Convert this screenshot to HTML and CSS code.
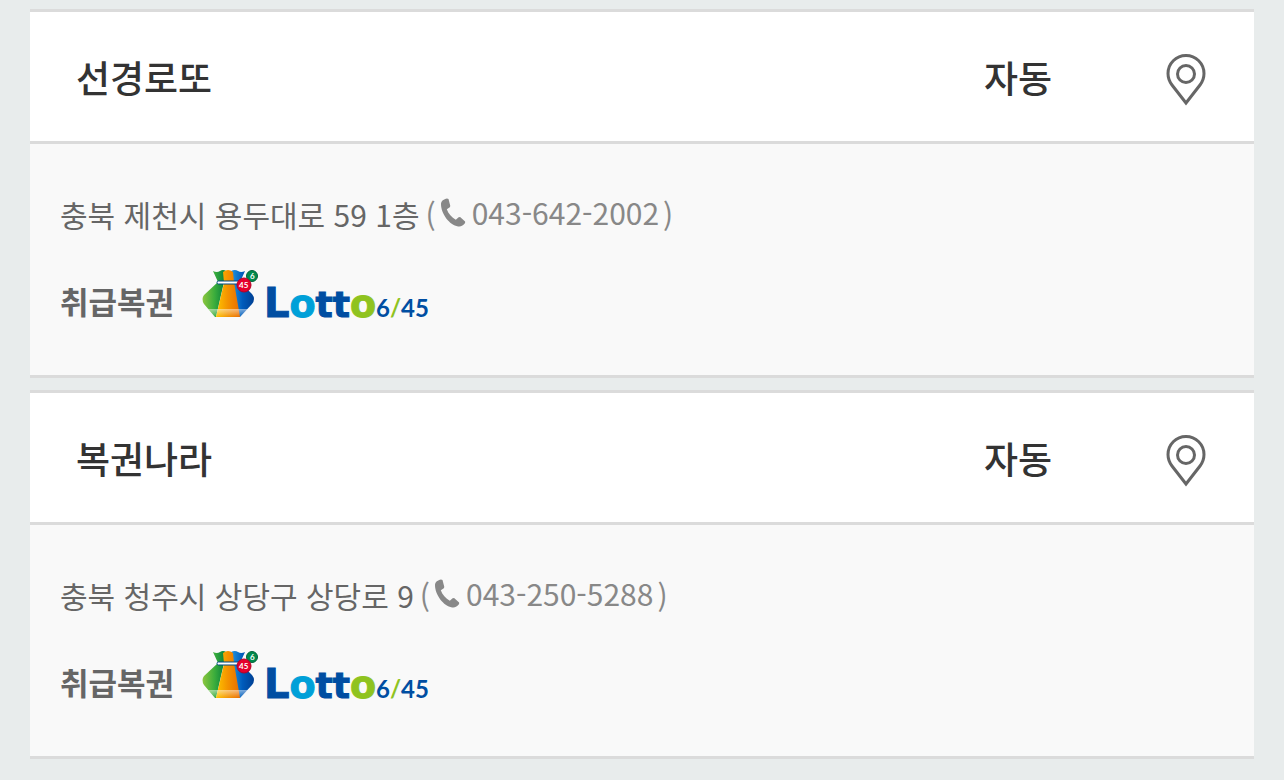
FILE: index.html
```html
<!DOCTYPE html>
<html lang="ko">
<head>
    <meta charset="UTF-8">
    <meta name="viewport" content="width=device-width, initial-scale=1.0">
    <title>로또 판매점</title>
    <link rel="stylesheet" href="styles.css">
</head>
<body>
    <main class="store-list">
        <section class="store">
            <div class="store-head">
                <h2 class="store-name">선경로또</h2>
                <span class="store-type">자동</span>
                <button type="button" class="map-button" aria-label="지도 보기">
                    <svg width="40" height="52" viewBox="0 0 40 52" fill="none" stroke="#666" stroke-width="3">
                        <path d="M20 49L6 31C3 27 2 23 2 19.5a18 18 0 0 1 36 0C38 23 37 27 34 31z"/>
                        <circle cx="20" cy="20" r="8.5"/>
                    </svg>
                </button>
            </div>
            <div class="store-detail">
                <p class="address">
                    <span>충북 제천시 용두대로 59 1층</span>
                    <span class="phone">(
                        <a href="tel:043-642-2002">
                            <svg width="26" height="30" viewBox="0 0 26 30" fill="#888">
                                <path d="M1 6C1 3 4 1 7 .5L8.500 1l1.800 7-.5 1.200-3 2c1.500 4.500 5 8.300 9 10.500l2.800-2.500 1.500-.2 5 4.500v1.500c-2 2.500-4 4-7 3.500C9.500 27 1 16 1 6z"/>
                            </svg>
                            043-642-2002</a>
                        )</span>
                </p>
                <div class="lottery">
                    <strong>취급복권</strong>
                    <svg class="lotto-logo" width="228" height="54" viewBox="0 0 228 54" role="img" aria-label="Lotto 6/45">
                        <defs>
                            <linearGradient id="bagGreen">
                                <stop offset="0" stop-color="#8dc63f"/>
                                <stop offset=".5" stop-color="#3dae3c"/>
                                <stop offset="1" stop-color="#007d3e"/>
                            </linearGradient>
                            <linearGradient id="bagOrange">
                                <stop offset="0" stop-color="#ffc400"/>
                                <stop offset=".5" stop-color="#f39200"/>
                                <stop offset="1" stop-color="#e96d00"/>
                            </linearGradient>
                            <linearGradient id="bagBlue">
                                <stop offset="0" stop-color="#2196e0"/>
                                <stop offset=".5" stop-color="#005bbb"/>
                                <stop offset="1" stop-color="#004094"/>
                            </linearGradient>
                            <linearGradient id="bagShine" x2="0" y2="1">
                                <stop offset="0" stop-color="#fff" stop-opacity=".5"/>
                                <stop offset="1" stop-color="#fff" stop-opacity="0"/>
                            </linearGradient>
                        </defs>
                        <path fill="url(#bagGreen)" d="M13 4q4 2 7 0 3-2 6 0l-2 11-8 35h-1L4 37q-3-5 0-9L18 15z"/>
                        <path fill="url(#bagBlue)" d="M31 4q4-2 7 0 3 2 7 0l-5 11 12 12q4 5 0 10L40 50h-6z"/>
                        <path fill="url(#bagOrange)" d="M23 5q5-4 10 0l1 10 6 35H16l8-34z"/>
                        <path fill="url(#bagShine)" d="M8 42h40l-8 8H15z"/>
                        <rect x="17" y="14" width="24" height="3" rx="1.500" fill="#fff" stroke="#004b82"/>
                        <circle cx="52" cy="9" r="5.500" fill="#00894c" stroke="#00643b"/>
                        <text class="ball-number" x="50" y="12">6</text>
                        <circle cx="44" cy="18" r="7" fill="#e5002c" stroke="#b40024"/>
                        <text class="ball-number" x="39" y="21">45</text>
                        <text class="logo-word" x="64" y="50"><tspan class="logo-l">L</tspan><tspan class="logo-o1">o</tspan><tspan class="logo-t">tt</tspan><tspan class="logo-o2">o</tspan></text>
                        <text class="logo-number" x="176" y="50">6<tspan class="slash">/</tspan>45</text>
                    </svg>
                </div>
            </div>
        </section>

        <section class="store">
            <div class="store-head">
                <h2 class="store-name">복권나라</h2>
                <span class="store-type">자동</span>
                <button type="button" class="map-button" aria-label="지도 보기">
                    <svg width="40" height="52" viewBox="0 0 40 52" fill="none" stroke="#666" stroke-width="3">
                        <path d="M20 49L6 31C3 27 2 23 2 19.5a18 18 0 0 1 36 0C38 23 37 27 34 31z"/>
                        <circle cx="20" cy="20" r="8.5"/>
                    </svg>
                </button>
            </div>
            <div class="store-detail">
                <p class="address">
                    <span>충북 청주시 상당구 상당로 9</span>
                    <span class="phone">(
                        <a href="tel:043-250-5288">
                            <svg width="26" height="30" viewBox="0 0 26 30" fill="#888">
                                <path d="M1 6C1 3 4 1 7 .5L8.500 1l1.800 7-.5 1.200-3 2c1.500 4.500 5 8.300 9 10.500l2.800-2.500 1.500-.2 5 4.500v1.500c-2 2.500-4 4-7 3.500C9.500 27 1 16 1 6z"/>
                            </svg>
                            043-250-5288</a>
                        )</span>
                </p>
                <div class="lottery">
                    <strong>취급복권</strong>
                    <svg class="lotto-logo" width="228" height="54" viewBox="0 0 228 54" role="img" aria-label="Lotto 6/45">
                        <path fill="url(#bagGreen)" d="M13 4q4 2 7 0 3-2 6 0l-2 11-8 35h-1L4 37q-3-5 0-9L18 15z"/>
                        <path fill="url(#bagBlue)" d="M31 4q4-2 7 0 3 2 7 0l-5 11 12 12q4 5 0 10L40 50h-6z"/>
                        <path fill="url(#bagOrange)" d="M23 5q5-4 10 0l1 10 6 35H16l8-34z"/>
                        <path fill="url(#bagShine)" d="M8 42h40l-8 8H15z"/>
                        <rect x="17" y="14" width="24" height="3" rx="1.500" fill="#fff" stroke="#004b82"/>
                        <circle cx="52" cy="9" r="5.500" fill="#00894c" stroke="#00643b"/>
                        <text class="ball-number" x="50" y="12">6</text>
                        <circle cx="44" cy="18" r="7" fill="#e5002c" stroke="#b40024"/>
                        <text class="ball-number" x="39" y="21">45</text>
                        <text class="logo-word" x="64" y="50"><tspan class="logo-l">L</tspan><tspan class="logo-o1">o</tspan><tspan class="logo-t">tt</tspan><tspan class="logo-o2">o</tspan></text>
                        <text class="logo-number" x="176" y="50">6<tspan class="slash">/</tspan>45</text>
                    </svg>
                </div>
            </div>
        </section>
    </main>
</body>
</html>
```
FILE: styles.css
```css
* {
    box-sizing: border-box;
}
body {
    margin: 0;
    background-color: #e8ecec;
    font-family: "Noto Sans CJK KR", sans-serif;
    color: #666;
}
.store-list {
    display: flex;
    flex-direction: column;
    gap: 12px;
    padding: 9px 30px 20px;
}
.store {
    border-top: 3px solid #dbdbdb;
    border-bottom: 3px solid #dbdbdb;
    background-color: #f9f9f9;
}
.store-head {
    display: flex;
    align-items: center;
    padding: 37px 48px 35px 46px;
    border-bottom: 3px solid #dbdbdb;
    background-color: #fff;
    color: #333;
    font-size: 37px;
    line-height: 57px;
}
.store-name {
    flex: 1;
    margin: 0;
    font-size: 37px;
    font-weight: 500;
}
.store-type {
    font-weight: 500;
}
.map-button {
    display: flex;
    margin-left: 114px;
    padding: 4px 0 0;
    border: none;
    background: none;
    cursor: pointer;
}
.store-detail {
    padding: 48px 30px 52px;
}
.address {
    display: flex;
    align-items: center;
    gap: 6px;
    margin: 0;
    font-size: 30px;
    line-height: 45px;
}
.phone,
.phone a {
    display: flex;
    align-items: center;
    gap: 4px;
    color: #888;
    text-decoration: none;
}
.phone a {
    padding-bottom: 4px;
    line-height: 41px;
}
.phone svg {
    margin-right: 2px;
}
.lottery {
    display: flex;
    align-items: flex-end;
    gap: 26px;
    padding-top: 30px;
    font-size: 31px;
    line-height: 45px;
}
.lottery strong {
    font-weight: 700;
}
.lotto-logo {
    display: block;
    margin-bottom: 2px;
    overflow: visible;
}
.logo-word {
    font-family: "DejaVu Sans", sans-serif;
    font-size: 38px;
    font-weight: 700;
    stroke-width: 1px;
}
.logo-l {
    fill: #004ea2;
    stroke: #004ea2;
    font-size: 40px;
}
.logo-o1 {
    fill: #00a0d8;
    stroke: #00a0d8;
}
.logo-t {
    fill: #004ea2;
    stroke: #004ea2;
    font-size: 36px;
}
.logo-o2 {
    fill: #8fc31f;
    stroke: #8fc31f;
}
.logo-number {
    fill: #004ea2;
    font-family: Lato, sans-serif;
    font-size: 24px;
    font-weight: 700;
}
.slash {
    fill: #8fc31f;
}
.ball-number {
    fill: #fff;
    font-family: Lato, sans-serif;
    font-size: 8px;
    font-weight: 700;
}
```
